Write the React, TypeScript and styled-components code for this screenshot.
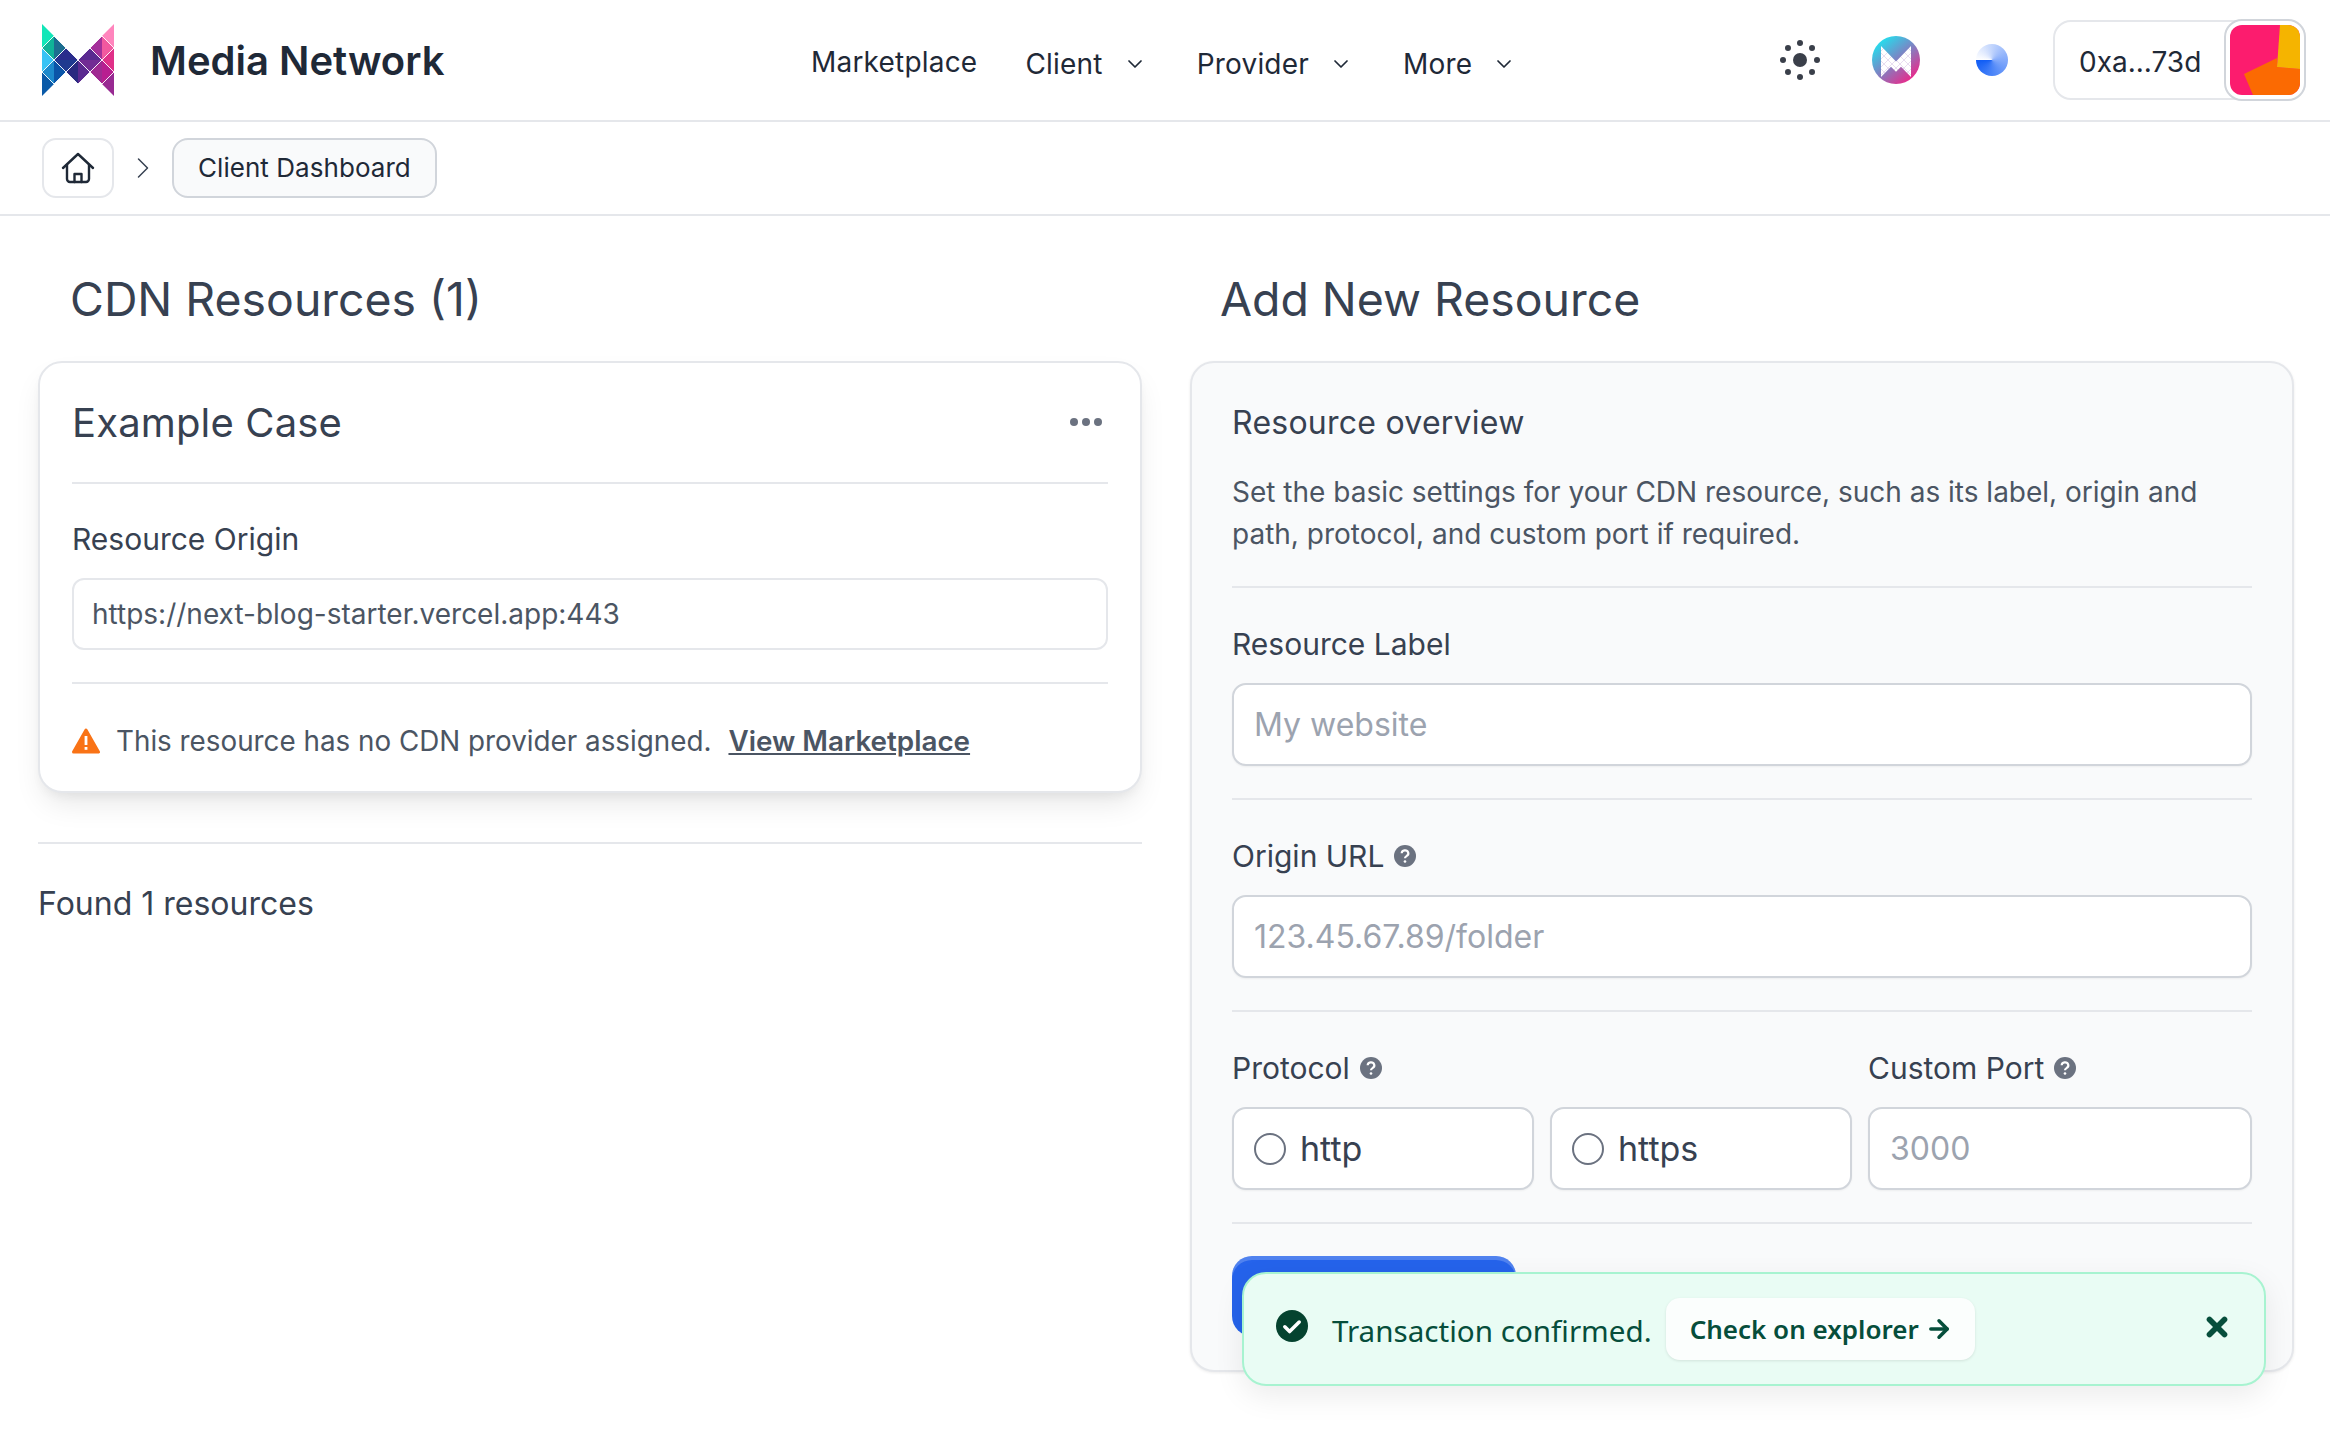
import styled, { createGlobalStyle } from "styled-components";
import { ArrowRight, ChevronDown, ChevronRight, X } from "lucide-react";

const GlobalStyle = createGlobalStyle`
  * { box-sizing: border-box; }
  html, body { margin: 0; padding: 0; background: #fff; height: 100%; overflow: hidden; }
  body { font-family: Inter, "Noto Sans", sans-serif; color: #1f2937; }
`;

const Page = styled.div`
  position: relative;
  width: 2330px;
  height: 1450px;
  overflow: hidden;
`;

const Header = styled.header`
  height: 122px;
  border-bottom: 2px solid #e5e7eb;
  padding: 0 24px 0 42px;
  display: flex;
  align-items: center;
`;

const Brand = styled.div`
  display: flex;
  align-items: center;
  gap: 36px;
  width: 769px;
  font-size: 40px;
  font-weight: 600;
  color: #1f2937;
`;

const Nav = styled.nav`
  display: flex;
  align-items: center;
  gap: 50px;
  font-size: 28px;
  letter-spacing: 0.2px;
  color: #1f2937;
`;

const NavLink = styled.span`
  padding-top: 4px;
  margin-right: -2px;
`;

const NavItem = styled.span`
  display: flex;
  align-items: center;
  gap: 20px;
  padding-top: 7px;
`;

const Actions = styled.div`
  margin-left: auto;
  display: flex;
  align-items: center;
`;

const Crumbs = styled.div`
  height: 94px;
  border-bottom: 2px solid #e5e7eb;
  padding: 0 0 0 42px;
  display: flex;
  align-items: center;
  gap: 11px;
`;

const HomeCrumb = styled.div`
  width: 72px;
  height: 60px;
  border: 2px solid #e5e7eb;
  border-radius: 14px;
  display: flex;
  align-items: center;
  justify-content: center;
`;

const Crumb = styled.div`
  height: 60px;
  padding: 0 24px 2px;
  border: 2px solid #d1d5db;
  border-radius: 16px;
  background: #f9fafb;
  display: flex;
  align-items: center;
  font-size: 26px;
  letter-spacing: 0.05px;
  color: #1f2937;
`;

const Columns = styled.main`
  display: grid;
  grid-template-columns: 1104px 1104px;
  gap: 48px;
  padding: 0 0 0 38px;
`;

const Title = styled.h2<{ $indent: number }>`
  margin: 54px 0 33px;
  padding-left: ${(p) => p.$indent}px;
  font-size: 46.4px;
  line-height: 58px;
  font-weight: 400;
  color: #374151;
`;

const Card = styled.section`
  background: #fff;
  border: 2px solid #e5e7eb;
  border-radius: 24px;
  padding: 29px 32px 32px;
  box-shadow: 0 15px 30px -6px rgba(0, 0, 0, 0.1), 0 6px 12px -4px rgba(0, 0, 0, 0.06);
`;

const CardHead = styled.div`
  display: flex;
  align-items: center;
  justify-content: space-between;
  height: 60px;
  font-size: 40px;
  font-weight: 400;
  letter-spacing: 0.15px;
  color: #374151;
`;

const Rule = styled.hr<{ $top: number; $bottom: number }>`
  margin: ${(p) => p.$top}px 0 ${(p) => p.$bottom}px;
  border: 0;
  border-top: 2px solid #e5e7eb;
`;

const Label = styled.div`
  display: flex;
  align-items: center;
  gap: 10px;
  font-size: 30px;
  line-height: 40px;
  color: #374151;
`;

const ReadOnly = styled.div`
  margin-top: 19px;
  height: 72px;
  border: 2px solid #e5e7eb;
  border-radius: 12px;
  padding: 0 18px;
  display: flex;
  align-items: center;
  font-size: 28px;
  color: #4b5563;
`;

const Notice = styled.div`
  display: flex;
  align-items: center;
  gap: 16px;
  font-size: 27.8px;
  line-height: 36px;
  color: #4b5563;
`;

const NoticeLink = styled.a`
  margin-left: 1px;
  font-weight: 600;
  text-decoration: underline;
  color: #4b5563;
`;

const Found = styled.div`
  font-size: 32px;
  line-height: 38px;
  color: #374151;
`;

const Panel = styled.section`
  background: #f9fafb;
  border: 2px solid #e5e7eb;
  border-radius: 24px;
  padding: 38px 40px;
  height: 1011px;
  box-shadow: 0 1px 3px rgba(0, 0, 0, 0.08);
`;

const PanelTitle = styled.div`
  font-size: 32px;
  line-height: 44px;
  font-weight: 400;
  letter-spacing: 0.25px;
  color: #374151;
`;

const Help = styled.p`
  margin: 26px 0 0;
  font-size: 28px;
  line-height: 42px;
  color: #4b5563;
`;

const Input = styled.div`
  margin-top: 19px;
  height: 83px;
  background: #fff;
  border: 2px solid #d1d5db;
  border-radius: 14px;
  padding: 0 20px;
  display: flex;
  align-items: center;
  gap: 14px;
  font-size: 32px;
  color: #9ca3af;
  box-shadow: 0 1px 2px rgba(0, 0, 0, 0.05);
`;

const Radio = styled.span`
  width: 32px;
  height: 32px;
  border: 2px solid #6b7280;
  border-radius: 50%;
`;

const RadioText = styled.span`
  font-size: 34px;
  color: #374151;
`;

const ProtocolRow = styled.div`
  display: grid;
  grid-template-columns: 302px 302px 1fr;
  column-gap: 16px;
`;

const ProtocolLabel = styled.div`
  grid-column: span 2;
`;

const SubmitButton = styled.div`
  width: 284px;
  height: 80px;
  background: #2563eb;
  border-radius: 20px;
  box-shadow: inset 0 4px 0 rgba(255, 255, 255, 0.2);
`;

const Toast = styled.div`
  position: absolute;
  left: 1242px;
  top: 1272px;
  width: 1024px;
  height: 114px;
  background: #e9fcf4;
  border: 2px solid #a7f3d0;
  border-radius: 24px;
  padding: 0 32px;
  display: flex;
  align-items: center;
  box-shadow: 0 10px 30px rgba(0, 0, 0, 0.08);
  font-family: "Noto Sans", sans-serif;
  font-size: 29.6px;
  color: #064e3b;
`;

const ToastBadge = styled.span`
  display: flex;
  margin-top: -6px;
`;

const ToastText = styled.span`
  margin-left: 24px;
  padding-top: 2px;
`;

const ExplorerLink = styled.div`
  margin-left: 14px;
  height: 62px;
  padding: 0 22px 0 24px;
  border-radius: 14px;
  background: #fbfefd;
  display: flex;
  align-items: center;
  gap: 6px;
  font-size: 26px;
  font-weight: 600;
  color: #064e3b;
  box-shadow: 0 1px 3px rgba(0, 0, 0, 0.1);
`;

const ToastClose = styled.span`
  margin-left: auto;
  display: flex;
  margin-top: -4px;
  color: #064e3b;
`;

const Wallet = styled.div`
  height: 80px;
  width: 253px;
  margin-left: 45px;
  border: 2px solid #e5e7eb;
  border-radius: 18px;
  padding: 0 0 0 24px;
  display: flex;
  align-items: center;
  justify-content: space-between;
  font-size: 28px;
  color: #1f2937;
`;

const WalletAddress = styled.span`
  padding-top: 3px;
`;

const AvatarFrame = styled.div`
  width: 82px;
  height: 82px;
  margin-right: -2px;
  border: 2px solid #d1d5db;
  border-radius: 18px;
  padding: 4px;
  background: #fff;
  flex-shrink: 0;
`;

const IconSlot = styled.div<{ $ml: number }>`
  display: flex;
  margin-left: ${(p) => p.$ml}px;
`;

const LoadingPie = styled.span`
  width: 32px;
  height: 32px;
  margin-left: 56px;
  border-radius: 50%;
  background: conic-gradient(from 270deg, #ffffff, #8fb2fb 45%, #0f5cf5);
`;

const DotsIcon = styled.svg`
  margin-right: 6px;
`;

const diamonds: [number, number, string, string, boolean][] = [
  [54, 48, "#10b398", "#1c6d90", true],
  [54, 72, "#1d8acc", "#0b55a8", true],
  [66, 60, "#2a2c8c", "#1f3a90", false],
  [78, 72, "#2a2a80", "#5a2a90", true],
  [90, 60, "#5a2a90", "#722c94", false],
  [102, 48, "#a4309a", "#f2589f", true],
  [102, 72, "#a02a92", "#b81e90", true],
];

const logoTriangles: [string, string][] = [
  ["42,24 54,36 42,48", "#12e6b8"],
  ["42,48 54,60 42,72", "#38c3f5"],
  ["42,72 54,84 42,96", "#0a5aa8"],
  ["114,24 114,48 102,36", "#ff85bd"],
  ["114,48 114,72 102,60", "#e03088"],
  ["114,72 114,96 102,84", "#982a92"],
];

function Logo() {
  return (
    <svg width="72" height="72" viewBox="42 24 72 72">
      {logoTriangles.map(([points, fill]) => (
        <polygon key={points} points={points} fill={fill} />
      ))}
      {diamonds.map(([x, y, a, b, upright]) => (
        <g key={`${x}-${y}`}>
          {upright ? (
            <>
              <polygon points={`${x},${y - 12} ${x},${y + 12} ${x - 12},${y}`} fill={a} />
              <polygon points={`${x},${y - 12} ${x},${y + 12} ${x + 12},${y}`} fill={b} />
            </>
          ) : (
            <>
              <polygon points={`${x - 12},${y} ${x + 12},${y} ${x},${y - 12}`} fill={a} />
              <polygon points={`${x - 12},${y} ${x + 12},${y} ${x},${y + 12}`} fill={b} />
            </>
          )}
          <polygon
            points={`${x},${y - 12} ${x + 12},${y} ${x},${y + 12} ${x - 12},${y}`}
            fill="none"
            stroke="#fff"
            strokeWidth="0.9"
          />
        </g>
      ))}
    </svg>
  );
}

function ThemeIcon() {
  const dots = [0, 45, 90, 135, 180, 225, 270, 315];
  return (
    <svg width="40" height="40" viewBox="-20 -20 40 40" fill="#3a3f4a">
      <circle r="7" />
      {dots.map((a) => (
        <circle
          key={a}
          r="3"
          cx={17 * Math.cos((a * Math.PI) / 180)}
          cy={17 * Math.sin((a * Math.PI) / 180)}
        />
      ))}
    </svg>
  );
}

function NetworkBadge() {
  return (
    <svg width="48" height="48" viewBox="0 0 48 48">
      <defs>
        <linearGradient id="net" x1="0.15" y1="0.1" x2="0.8" y2="0.9">
          <stop offset="0" stopColor="#22e0ee" />
          <stop offset="0.5" stopColor="#7c84c4" />
          <stop offset="1" stopColor="#e52d8d" />
        </linearGradient>
        <pattern id="lattice" width="8" height="8" patternUnits="userSpaceOnUse">
          <rect width="8" height="8" fill="#fff" />
          <path d="M0 0L8 8M8 0L0 8" stroke="#d9c6e6" strokeWidth="0.6" />
        </pattern>
      </defs>
      <circle cx="24" cy="24" r="24" fill="url(#net)" />
      <polygon points="9,10 24,25.5 39,10 39,41 29,30.7 24,35.8 19,30.7 9,41" fill="url(#lattice)" />
    </svg>
  );
}

function Avatar() {
  return (
    <svg width="70" height="70" viewBox="0 0 70 70">
      <defs>
        <clipPath id="av">
          <rect width="70" height="70" rx="12" />
        </clipPath>
      </defs>
      <g clipPath="url(#av)">
        <rect width="70" height="70" fill="#fc1c6e" />
        <polygon points="14,49 47,33 47,42 70,44 70,70 23,70" fill="#fb6a02" />
        <polygon points="50,0 70,0 70,44 47,42" fill="#f5b400" />
      </g>
    </svg>
  );
}

function HomeIcon() {
  return (
    <svg width="34" height="32" viewBox="0 0 34 32" fill="none" stroke="#1f2937" strokeWidth="2.4" strokeLinecap="round" strokeLinejoin="round">
      <path d="M2 16L17 2l15 14" />
      <path d="M6 13v14a3 3 0 0 0 3 3h16a3 3 0 0 0 3-3V13" />
      <path d="M13.5 30v-8h7v8" />
    </svg>
  );
}

function Warning() {
  return (
    <svg width="28" height="26" viewBox="0 0 28 26">
      <path d="M14 2L26.5 24H1.5Z" fill="#f97316" stroke="#f97316" strokeWidth="3" strokeLinejoin="round" />
      <rect x="12.6" y="8" width="2.8" height="9" fill="#fff" />
      <rect x="12.6" y="19" width="2.8" height="2.8" fill="#fff" />
    </svg>
  );
}

function Question() {
  return (
    <svg width="22" height="22" viewBox="0 0 20 20">
      <circle cx="10" cy="10" r="10" fill="#6b7280" />
      <path d="M7 7.6a3 2.8 0 1 1 4.4 2.5c-1 .6-1.4 1-1.4 2" fill="none" stroke="#fff" strokeWidth="2" />
      <circle cx="10" cy="15" r="1.2" fill="#fff" />
    </svg>
  );
}

function CheckBadge() {
  return (
    <svg width="32" height="32" viewBox="0 0 20 20">
      <circle cx="10" cy="10" r="10" fill="#05432f" />
      <path d="M5.5 10.5l3 3 6-6" fill="none" stroke="#fff" strokeWidth="2.2" strokeLinecap="round" strokeLinejoin="round" />
    </svg>
  );
}

function Dots() {
  return (
    <DotsIcon width="32" height="8" viewBox="0 0 32 8" fill="#6b7280">
      <circle cx="4" cy="4" r="4" />
      <circle cx="16" cy="4" r="4" />
      <circle cx="28" cy="4" r="4" />
    </DotsIcon>
  );
}

export default function App() {
  return (
    <Page>
      <GlobalStyle />
      <Header>
        <Brand>
          <Logo />
          Media Network
        </Brand>
        <Nav>
          <NavLink>Marketplace</NavLink>
          <NavItem>Client <ChevronDown size={24} strokeWidth={1.75} /></NavItem>
          <NavItem>Provider <ChevronDown size={24} strokeWidth={1.75} /></NavItem>
          <NavItem>More <ChevronDown size={24} strokeWidth={1.75} /></NavItem>
        </Nav>
        <Actions>
          <IconSlot $ml={0}><ThemeIcon /></IconSlot>
          <IconSlot $ml={52}><NetworkBadge /></IconSlot>
          <LoadingPie />
          <Wallet>
            <WalletAddress>0xa...73d</WalletAddress>
            <AvatarFrame><Avatar /></AvatarFrame>
          </Wallet>
        </Actions>
      </Header>
      <Crumbs>
        <HomeCrumb><HomeIcon /></HomeCrumb>
        <ChevronRight size={36} strokeWidth={1} color="#374151" />
        <Crumb>Client Dashboard</Crumb>
      </Crumbs>
      <Columns>
        <div>
          <Title $indent={32}>CDN Resources (1)</Title>
          <Card>
            <CardHead>Example Case <Dots /></CardHead>
            <Rule $top={30} $bottom={35} />
            <Label>Resource Origin</Label>
            <ReadOnly>https://next-blog-starter.vercel.app:443</ReadOnly>
            <Rule $top={32} $bottom={39} />
            <Notice>
              <Warning />
              This resource has no CDN provider assigned.
              <NoticeLink>View Marketplace</NoticeLink>
            </Notice>
          </Card>
          <Rule $top={49} $bottom={41} />
          <Found>Found 1 resources</Found>
        </div>
        <div>
          <Title $indent={30}>Add New Resource</Title>
          <Panel>
            <PanelTitle>Resource overview</PanelTitle>
            <Help>
              Set the basic settings for your CDN resource, such as its label, origin and path,
              protocol, and custom port if required.
            </Help>
            <Rule $top={31} $bottom={36} />
            <Label>Resource Label</Label>
            <Input>My website</Input>
            <Rule $top={32} $bottom={36} />
            <Label>Origin URL <Question /></Label>
            <Input>123.45.67.89/folder</Input>
            <Rule $top={32} $bottom={36} />
            <ProtocolRow>
              <ProtocolLabel><Label>Protocol <Question /></Label></ProtocolLabel>
              <Label>Custom Port <Question /></Label>
              <Input><Radio /><RadioText>http</RadioText></Input>
              <Input><Radio /><RadioText>https</RadioText></Input>
              <Input>3000</Input>
            </ProtocolRow>
            <Rule $top={32} $bottom={32} />
            <SubmitButton />
          </Panel>
        </div>
      </Columns>
      <Toast>
        <ToastBadge><CheckBadge /></ToastBadge>
        <ToastText>Transaction confirmed.</ToastText>
        <ExplorerLink>Check on explorer <ArrowRight size={28} strokeWidth={3} /></ExplorerLink>
        <ToastClose><X size={30} strokeWidth={4.5} /></ToastClose>
      </Toast>
    </Page>
  );
}
